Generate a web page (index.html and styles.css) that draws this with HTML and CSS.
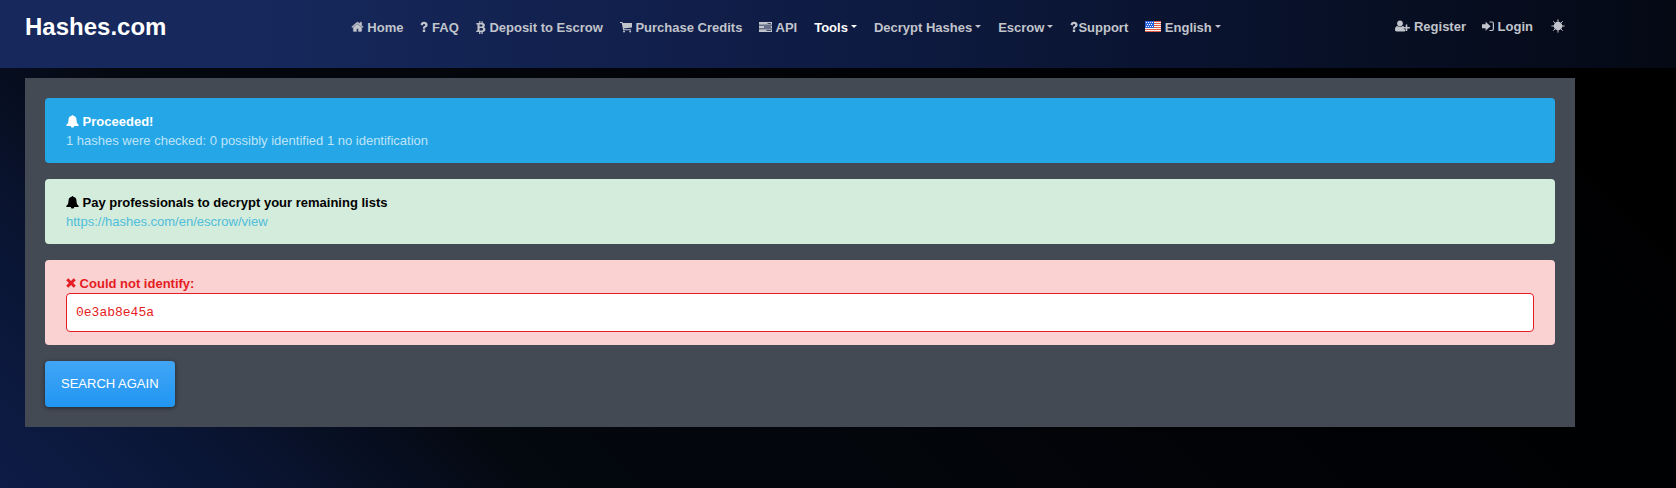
FILE: index.html
```
<!DOCTYPE html>
<html lang="en">
<head>
<meta charset="utf-8">
<title>Hashes.com</title>
<link rel="stylesheet" href="styles.css">
</head>
<body>
<header class="navbar">
  <a class="brand" href="#">Hashes.com</a>
  <nav class="main-nav" aria-label="Main">
    <a class="nav-link" href="#"><svg class="icon" viewBox="0 90 1792 1792" width="13" height="13"><path d="M1472 992v480q0 26-19 45t-45 19h-384v-384h-256v384h-384q-26 0-45-19t-19-45v-480q0-1 .5-3t.5-3l575-474 575 474q1 2 1 6zm223-69l-62 74q-8 9-21 11h-3q-13 0-21-7l-692-577-692 577q-12 8-24 7-13-2-21-11l-62-74q-8-10-7-23.500t11-21.500l719-599q32-26 76-26t76 26l244 204v-195q0-14 9-23t23-9h192q14 0 23 9t9 23v408l219 182q10 8 11 21.500t-7 23.500z" stroke="currentColor" stroke-width="50"/></svg> Home</a>
    <a class="nav-link" href="#"><svg class="icon" viewBox="0 0 8 13" width="8" height="13"><path d="M2.800 8.600h2.400v2.400H2.800zM.5 3.700C.8 1.700 2.100.7 4 .7c2 0 3.600 1.200 3.600 3 0 1.400-.8 2.100-1.600 2.600-.7.400-.9.700-.9 1.500H2.900c0-1.600.4-2.200 1.400-2.800.6-.3.900-.6.900-1.100 0-.6-.5-1-1.200-1-.8 0-1.100.5-1.500 1.600z"/></svg> FAQ</a>
    <a class="nav-link" href="#"><svg class="icon" viewBox="0 0 10 13" width="10" height="13"><path fill-rule="evenodd" d="M.4 2h2.700V.2h1.300V2h1V.2h1.300v1.900c1.400.3 2.200 1 2.200 2.200 0 .9-.4 1.500-1.200 1.900 1.100.3 1.700 1.100 1.700 2.200 0 1.700-1.100 2.400-2.700 2.600v1.900H5.400v-1.800h-1v1.800H3.100V11H.2l.3-1.400h1V3.400H.4zm3.200 1.400v2.200h1.200c1 0 1.700-.3 1.700-1.100s-.7-1.100-1.700-1.100zm0 3.500v2.700h1.500c1.100 0 2-.4 2-1.300 0-1-.8-1.400-2-1.400z"/></svg> Deposit to Escrow</a>
    <a class="nav-link" href="#"><svg class="icon" viewBox="0 0 12 13" width="12" height="13"><path d="M0 1h2.500l.3 1H12v4.500L3.900 7.400l.2.900H11v1H3.200L1.800 2H0z"/><circle cx="4" cy="10.400" r="1"/><circle cx="10.200" cy="10.400" r="1"/></svg> Purchase Credits</a>
    <a class="nav-link" href="#"><svg class="icon" viewBox="0 0 13 13" width="13" height="13"><path fill-rule="evenodd" d="M0 1h13v2.800H0zm8.500 1v.8H12V2zM0 4.600h13v2.800H0zm5 1v.8h7v-.8zM0 8.200h13v2.800H0zm7.500 1v.8H12v-.8z"/></svg> API</a>
    <a class="nav-link active caret" href="#">Tools</a>
    <a class="nav-link caret" href="#">Decrypt Hashes</a>
    <a class="nav-link caret" href="#">Escrow</a>
    <a class="nav-link" href="#"><svg class="icon" viewBox="0 0 8 13" width="8" height="13"><path d="M2.800 8.600h2.400v2.400H2.800zM.5 3.700C.8 1.700 2.100.7 4 .7c2 0 3.600 1.200 3.600 3 0 1.400-.8 2.100-1.600 2.600-.7.400-.9.700-.9 1.500H2.900c0-1.600.4-2.200 1.400-2.800.6-.3.900-.6.900-1.100 0-.6-.5-1-1.200-1-.8 0-1.100.5-1.500 1.600z"/></svg>Support</a>
    <a class="nav-link caret" href="#"><svg class="flag" viewBox="0 0 16 11" width="16" height="11"><path fill="#fbf8f5" d="M0 0h16v11H0z"/><path stroke="#df5a45" d="M0 .5h16M0 2.500h16M0 4.500h16M0 6.500h16M0 8.500h16M0 10.500h16"/><path fill="#2b62dc" d="M0 0h9v7H0z"/><path stroke="#fff" stroke-dasharray="1 1" d="M1 1.500h7M2 3.500h6M1 5.500h7"/></svg> English</a>
  </nav>
  <nav class="user-nav" aria-label="Account">
    <a class="nav-link" href="#"><svg class="icon" viewBox="0 0 15 13" width="15" height="13"><path d="M5 .5c1.700 0 2.900 1.300 2.900 2.900S6.700 6.400 5 6.400 2.100 5.100 2.100 3.400 3.400.5 5 .5zM2.400 5.900c1.600 1.300 3.700 1.300 5.300 0 .5 0 .8.200 1.100.4v2.900h1.400V11c-.3.400-.8.500-1.400.5H1.600C.6 11.500 0 10.900 0 9.800c0-2 .6-3.700 2.400-3.900zM10.700 4.500h1.600V7h2.600v1.500h-2.600V11h-1.600V8.500H8.400V7h2.300z"/></svg> Register</a>
    <a class="nav-link" href="#"><svg class="icon" viewBox="0 0 12 13" width="12" height="13"><path d="M0 4.200h3.600V1.700L8.600 6.200 3.600 10.700V8.200H0z"/><path fill="none" stroke="currentColor" stroke-width="1.200" d="M7.500 2H10c.9 0 1.400.5 1.400 1.400v5.700c0 .9-.5 1.400-1.400 1.400H7.500"/></svg> Login</a>
    <button class="theme-toggle" type="button" aria-label="Toggle theme"><svg class="icon" viewBox="0 0 14 14" width="14" height="14"><circle cx="7" cy="7" r="4.300"/><path stroke="currentColor" d="M7 .4v13.200M.4 7h13.200M2.300 2.300l9.400 9.400M11.700 2.300l-9.400 9.400"/></svg></button>
  </nav>
</header>
<main class="panel">
  <section class="alert info">
    <strong class="title"><svg class="icon" viewBox="0 0 13 13" width="13" height="13"><path d="M6.500 0c.5 0 .8.300.8.800 2 .4 3.200 1.800 3.200 3.900 0 2.600.7 4.100 2.300 5.200 0 .6-.4 1-1 1H8.200c0 1-.7 1.700-1.700 1.700s-1.700-.7-1.700-1.700H1.200c-.6 0-1-.4-1-1 1.600-1.100 2.300-2.600 2.300-5.200 0-2.100 1.200-3.500 3.200-3.900 0-.5.300-.8.800-.8z"/></svg> Proceeded!</strong>
    <p class="text">1 hashes were checked: 0 possibly identified 1 no identification</p>
  </section>
  <section class="alert success">
    <strong class="title"><svg class="icon" viewBox="0 0 13 13" width="13" height="13"><path d="M6.500 0c.5 0 .8.300.8.800 2 .4 3.200 1.800 3.200 3.900 0 2.600.7 4.100 2.300 5.200 0 .6-.4 1-1 1H8.200c0 1-.7 1.700-1.700 1.700s-1.700-.7-1.700-1.700H1.200c-.6 0-1-.4-1-1 1.600-1.100 2.300-2.600 2.300-5.200 0-2.100 1.200-3.500 3.200-3.900 0-.5.300-.8.800-.8z"/></svg> Pay professionals to decrypt your remaining lists</strong>
    <p class="text"><a href="https://hashes.com/en/escrow/view">https://hashes.com/en/escrow/view</a></p>
  </section>
  <section class="alert danger">
    <strong class="title"><svg class="icon" viewBox="0 0 10 13" width="10" height="13"><path d="M2.300 1.200 5 3.900l2.700-2.700 2.100 2.100L7.100 6l2.700 2.700-2.100 2.100L5 8.100l-2.700 2.700L.2 8.700 2.900 6 .2 3.300z"/></svg> Could not identify:</strong>
    <pre class="hashes">0e3ab8e45a</pre>
  </section>
  <button class="search" type="button">SEARCH AGAIN</button>
</main>
</body>
</html>
```
FILE: styles.css
```
* { box-sizing: border-box; }
html { min-height: 100%; }
body {
  margin: 0;
  min-height: 100vh;
  font: 13px/20px "Liberation Sans", Arial, sans-serif;
  color: #fff;
  background: linear-gradient(45deg, #0e1c47 0%, #0a1533 12%, #04080f 25%, #010205 65%, #000 100%) #000;
}
a { color: inherit; text-decoration: none; }
.icon { fill: currentColor; vertical-align: -2px; }
.flag { vertical-align: 0; }
.navbar {
  display: grid;
  grid-template-columns: 12fr auto 13fr;
  align-items: start;
  min-height: 68px;
  padding: 8px 103px 0 25px;
  background: linear-gradient(90deg, #16285c 15%, #0e1b43 50%, #040914 100%);
}
.brand { font-size: 24px; line-height: 38px; font-weight: 700; }
.main-nav, .user-nav { display: flex; font-weight: 700; color: #c1c4cb; white-space: nowrap; }
.main-nav { padding-top: 10px; gap: 1px; }
.user-nav { padding-top: 9px; justify-content: flex-end; }
.nav-link { padding: 0 8px; }
.active { color: #fff; }
.caret::after {
  content: "";
  display: inline-block;
  margin-left: 3px;
  vertical-align: 4px;
  border: 3px solid transparent;
  border-top-color: currentColor;
  border-bottom: 0;
}
.theme-toggle { padding: 0 8px; margin-left: 2px; border: 0; background: none; color: inherit; font: inherit; }
.panel {
  margin: 10px 101px 0 25px;
  padding: 20px;
  background: #434a54;
}
.alert { margin-bottom: 16px; padding: 14px 21px 12px; border-radius: 4px; }
.title { display: block; line-height: 19px; }
.text { margin: 0; }
.info { background: #25a6e6; }
.info .text { color: #bee4f8; }
.success { background: #d4ecdb; color: #000; }
.success .text { color: #4fbddb; }
.danger { padding-bottom: 13px; background: #fad2d2; color: #e51c23; }
.hashes {
  margin: 0;
  padding: 9px;
  border: 1px solid #e51c23;
  border-radius: 4px;
  background: #fff;
  font: 13px/19px "Liberation Mono", monospace;
}
.search {
  display: block;
  padding: 13px 16px;
  border: 0;
  border-radius: 4px;
  background: linear-gradient(#42a5f5, #2196f3);
  box-shadow: 0 1px 4px rgba(0, 0, 0, .5);
  color: #fff;
  font: inherit;
}
```
